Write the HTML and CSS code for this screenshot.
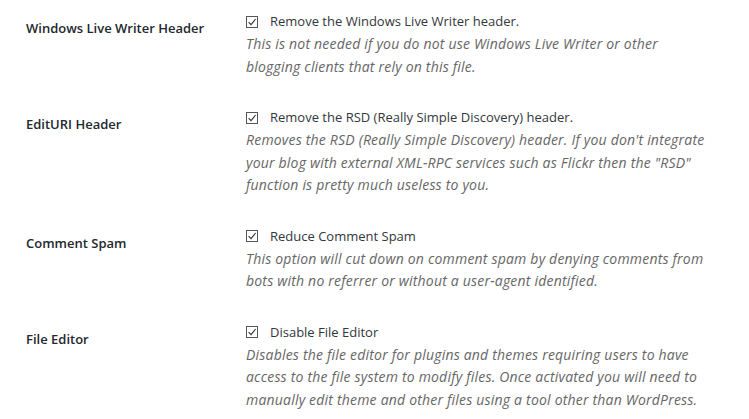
FILE: index.html
```html
<!DOCTYPE html>
<html>
<head>
    <title>Security Settings</title>
    <link rel="stylesheet" href="styles.css">
</head>
<body>
    <div class="form-table">
        <div class="row">
            <div class="label">Windows Live Writer Header</div>
            <div class="field">
                <label class="check">
                    <svg class="box" width="12" height="12" viewBox="0 0 12 12"><rect x="0.5" y="0.5" width="11" height="11" fill="#fff" stroke="#555"/><path d="M2.6 6.2 L5 8.6 L9.6 3" fill="none" stroke="#333" stroke-width="1.1"/></svg>
                    Remove the Windows Live Writer header.
                </label>
                <p class="desc">This is not needed if you do not use Windows Live Writer or other blogging clients that rely on this file.</p>
            </div>
        </div>
        <div class="row">
            <div class="label">EditURI Header</div>
            <div class="field">
                <label class="check">
                    <svg class="box" width="12" height="12" viewBox="0 0 12 12"><rect x="0.5" y="0.5" width="11" height="11" fill="#fff" stroke="#555"/><path d="M2.6 6.2 L5 8.6 L9.6 3" fill="none" stroke="#333" stroke-width="1.1"/></svg>
                    Remove the RSD (Really Simple Discovery) header.
                </label>
                <p class="desc">Removes the RSD (Really Simple Discovery) header. If you don't integrate your blog with external XML-RPC services such as Flickr then the "RSD" function is pretty much useless to you.</p>
            </div>
        </div>
        <div class="row">
            <div class="label">Comment Spam</div>
            <div class="field">
                <label class="check">
                    <svg class="box" width="12" height="12" viewBox="0 0 12 12"><rect x="0.5" y="0.5" width="11" height="11" fill="#fff" stroke="#555"/><path d="M2.6 6.2 L5 8.6 L9.6 3" fill="none" stroke="#333" stroke-width="1.1"/></svg>
                    Reduce Comment Spam
                </label>
                <p class="desc">This option will cut down on comment spam by denying comments from bots with no referrer or without a user-agent identified.</p>
            </div>
        </div>
        <div class="row">
            <div class="label">File Editor</div>
            <div class="field">
                <label class="check">
                    <svg class="box" width="12" height="12" viewBox="0 0 12 12"><rect x="0.5" y="0.5" width="11" height="11" fill="#fff" stroke="#555"/><path d="M2.6 6.2 L5 8.6 L9.6 3" fill="none" stroke="#333" stroke-width="1.1"/></svg>
                    Disable File Editor
                </label>
                <p class="desc">Disables the file editor for plugins and themes requiring users to have access to the file system to modify files. Once activated you will need to manually edit theme and other files using a tool other than WordPress.</p>
            </div>
        </div>
    </div>
</body>
</html>
```

FILE: styles.css
```css
body {
    margin: 0;
    background: #fff;
    font-family: "Open Sans", "Noto Sans", sans-serif;
    font-size: 13px;
    color: #444;
}

.form-table {
    padding: 10px 0 0 26px;
}

.row {
    display: grid;
    grid-template-columns: 220px 462px;
    padding-bottom: 28px;
}

.label {
    font-weight: 600;
    color: #23282d;
    line-height: 23px;
    padding-top: 7px;
}

.field {
    line-height: 23px;
}

.check {
    display: flex;
    align-items: center;
    gap: 12px;
    color: #32373c;
}

.box {
    flex: none;
}

.desc {
    margin: 0;
    font-size: 14px;
    letter-spacing: 0.2px;
    line-height: 22.5px;
    font-style: italic;
    color: #666;
}
```
